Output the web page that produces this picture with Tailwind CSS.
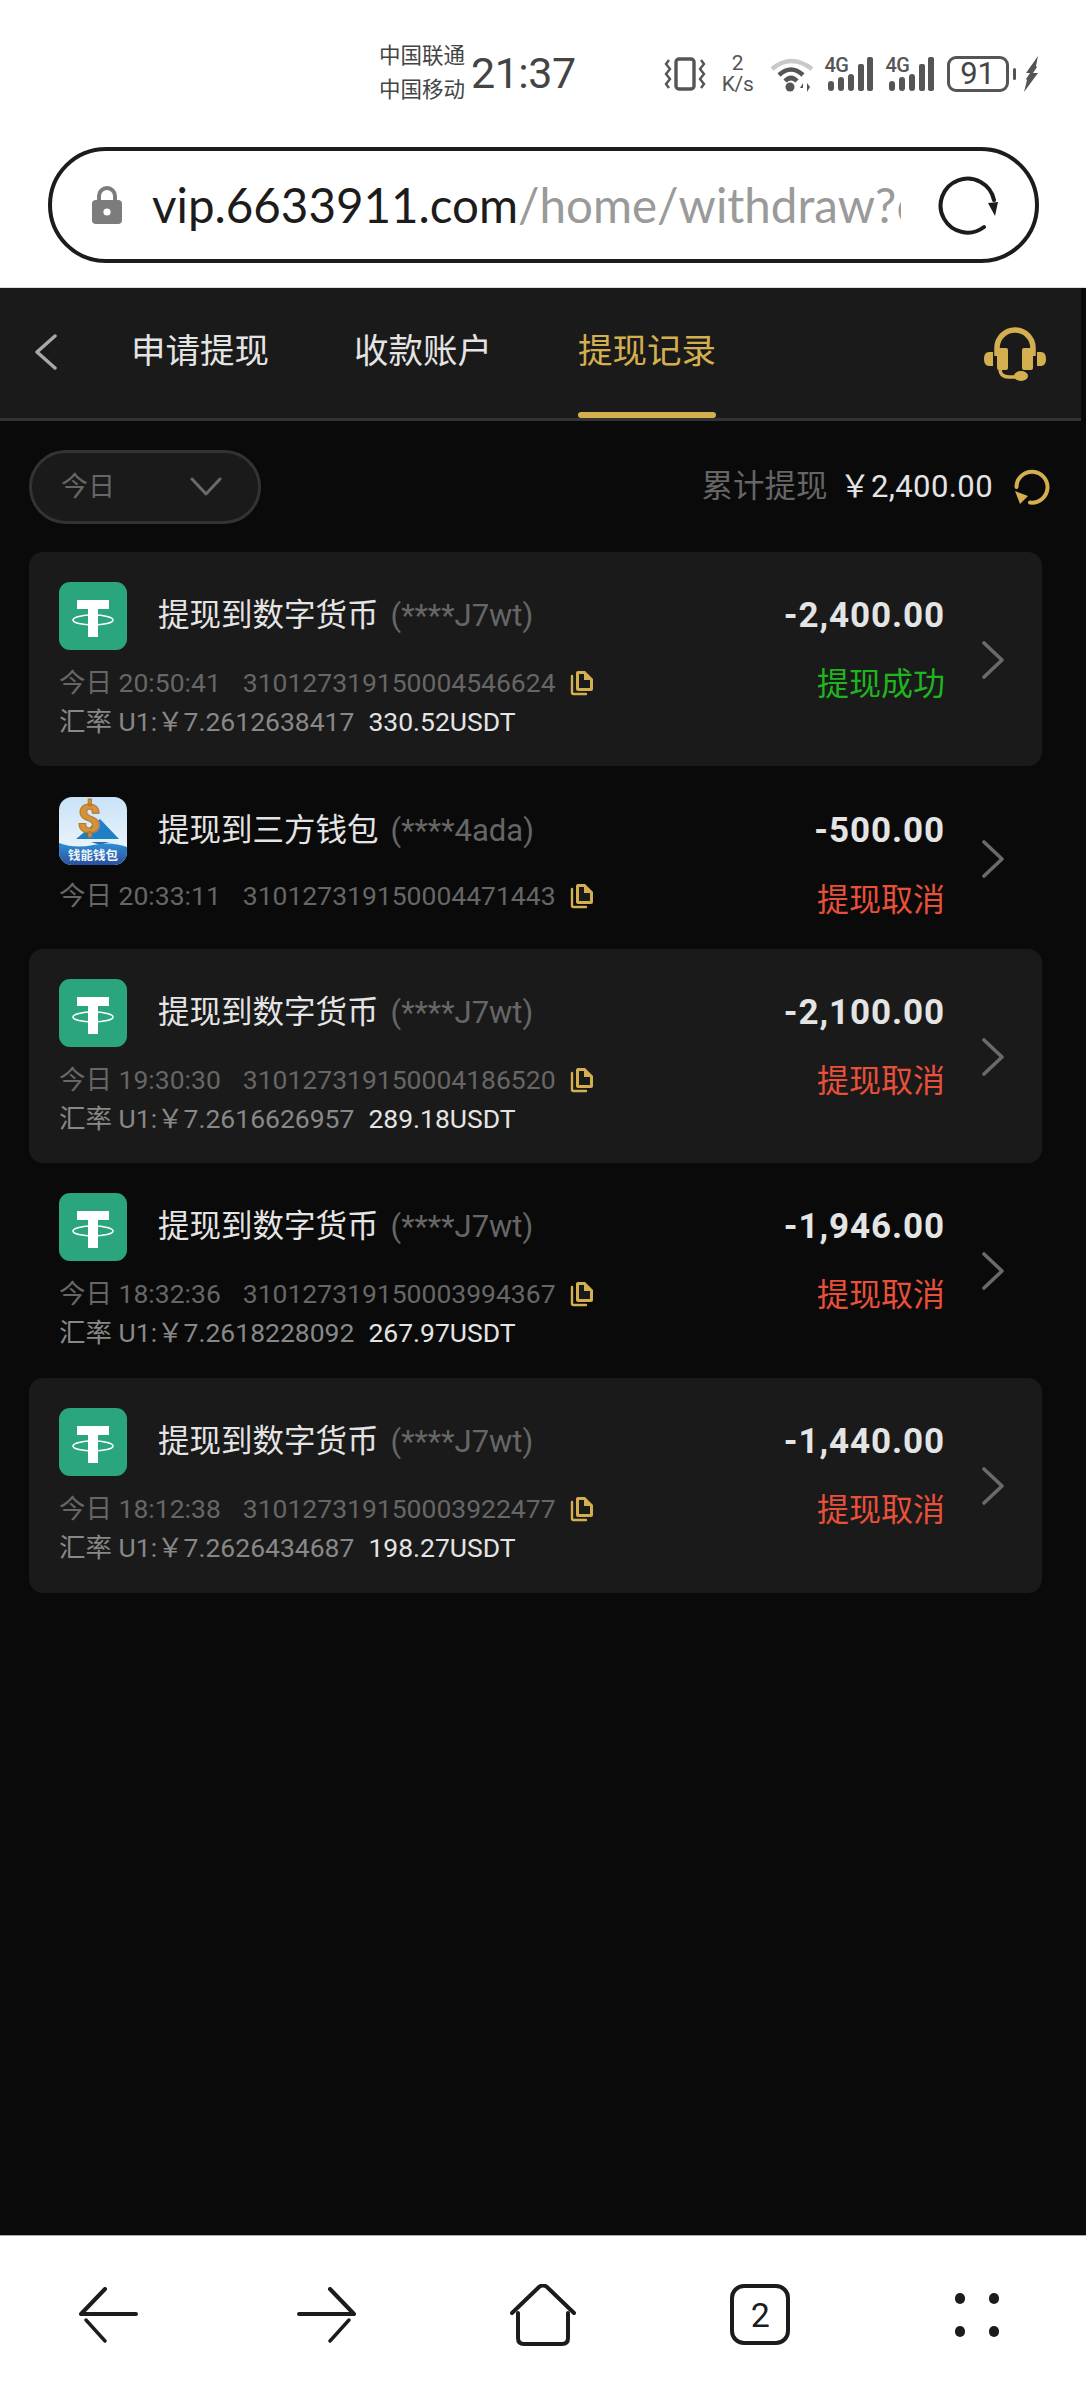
<!DOCTYPE html>
<html lang="zh-CN">
<head>
    <meta charset="UTF-8">
    <meta name="viewport" content="width=device-width, initial-scale=1.0">
    <title>提现记录</title>
    <script src="https://cdn.jsdelivr.net/npm/@tailwindcss/browser@4"></script>
</head>
<body class="bg-[#0a0a0a] h-[2400px] overflow-hidden flex flex-col font-[Roboto,'Noto_Sans_CJK_SC',sans-serif]">
    <!-- shared icons -->
    <svg class="hidden">
        <symbol id="usdt" viewBox="0 0 68 68">
            <rect width="68" height="68" rx="11" fill="#2aa57e"/>
            <rect x="18" y="18" width="32" height="9" fill="#fff"/>
            <rect x="29" y="18" width="10" height="37" fill="#fff"/>
            <ellipse cx="34" cy="38" rx="20" ry="5" fill="none" stroke="#fff" stroke-width="1.6"/>
        </symbol>
        <symbol id="copy" viewBox="0 0 24 26">
            <path d="M2 6v16.5q0 1.5 1.5 1.5H16" fill="none" stroke="#d4af50" stroke-width="2.4" stroke-linecap="round"/>
            <path d="M6 3q0-2 2-2h7l8 8v10q0 2-2 2H8q-2 0-2-2z" fill="#d4af50"/>
            <path d="M9 4h5v6h6v8H9z" fill="#1a1a1a"/>
        </symbol>
        <symbol id="next" viewBox="0 0 24 38">
            <path d="M3 2l18 17L3 36" fill="none" stroke="#6a6a6a" stroke-width="3.6" stroke-linecap="round" stroke-linejoin="round"/>
        </symbol>
    </svg>

    <!-- system status bar -->
    <div class="bg-white h-[147px] shrink-0 flex items-center pl-[379px] text-[#444]">
        <div class="w-[88px] text-[21.5px] leading-[34px] mt-[-2px] whitespace-nowrap">
            <div>中国联通</div>
            <div>中国移动</div>
        </div>
        <span class="ml-[4px] text-[43px] leading-none tracking-[-0.5px]">21:37</span>
        <div class="ml-[88px] flex items-center">
            <svg width="42" height="36" viewBox="0 0 42 36" fill="none" stroke="#555">
                <rect x="12" y="3" width="18" height="30" rx="3" stroke-width="3.4"/>
                <path d="M5 4l-3 4 4 5-4 5 4 5-4 5 3 4M37 4l3 4-4 5 4 5-4 5 4 5-3 4" stroke-width="2.4"/>
            </svg>
            <div class="ml-[13px] w-[38px] flex flex-col items-center text-[21px] leading-[21px] text-[#555]">
                <span>2</span>
                <span class="tracking-[-0.3px]">K/s</span>
            </div>
            <svg class="ml-[13px]" width="44" height="36" viewBox="0 0 44 36" fill="none">
                <path d="M2 13Q21-3 42 13" stroke="#c9c9c9" stroke-width="4.5"/>
                <path d="M9 19Q21 8 33 19M15 25Q21 19 27 25" stroke="#555" stroke-width="4.5"/>
                <circle cx="20" cy="31" r="4.5" fill="#555"/>
                <path d="M33 27l-3 5h3zM37 27v9l3-5z" fill="#555"/>
            </svg>
            <div class="ml-[11px] w-[48px] h-[36px] flex items-start relative">
                <span class="text-[20px] font-medium leading-[18px] text-[#555] tracking-[-0.8px]">4G</span>
                <svg class="absolute left-0 top-0" width="48" height="36" viewBox="0 0 48 36" fill="#555">
                    <rect x="3" y="25" width="6" height="10" rx="3"/><rect x="13" y="21" width="6" height="14" rx="3"/><rect x="23" y="18" width="6" height="17" rx="3"/><rect x="33" y="8" width="6" height="27" rx="2"/><rect x="42" y="1" width="6" height="34" rx="2"/>
                </svg>
            </div>
            <div class="ml-[13px] w-[48px] h-[36px] flex items-start relative">
                <span class="text-[20px] font-medium leading-[18px] text-[#555] tracking-[-0.8px]">4G</span>
                <svg class="absolute left-0 top-0" width="48" height="36" viewBox="0 0 48 36" fill="#555">
                    <rect x="3" y="25" width="6" height="10" rx="3"/><rect x="13" y="21" width="6" height="14" rx="3"/><rect x="23" y="18" width="6" height="17" rx="3"/><rect x="33" y="8" width="6" height="27" rx="2"/><rect x="42" y="1" width="6" height="34" rx="2"/>
                </svg>
            </div>
            <div class="ml-[13px] w-[62px] h-[36px] border-[3px] border-[#555] rounded-[9px] flex items-center justify-center text-[31px] leading-none text-[#444]">91</div>
            <div class="ml-[4px] w-[3px] h-[12px] bg-[#555] rounded-full"></div>
            <svg class="ml-[8px]" width="16" height="36" viewBox="0 0 16 36" fill="#555">
                <path d="M14 0L2 17h4l-4 6 1 1-3 12 14-19h-5l4-6-1-1z"/>
            </svg>
        </div>
    </div>

    <!-- url bar -->
    <div class="bg-white h-[141px] shrink-0 px-[48px] border-b border-[#ddd]">
        <div class="w-[991px] h-[116px] border-[4px] border-[#1c1c1c] rounded-full flex items-center pl-[39px]">
            <svg width="32" height="40" viewBox="0 0 32 40">
                <path d="M8 18v-7a8 8 0 0 1 16 0v7" fill="none" stroke="#7c7c7c" stroke-width="4"/>
                <rect x="1" y="15" width="30" height="24" rx="4" fill="#7c7c7c"/>
                <circle cx="16" cy="27" r="3.6" fill="#fff"/>
            </svg>
            <div class="ml-[29px] w-[749px] overflow-hidden whitespace-nowrap text-[47.5px] leading-[60px] font-[Lato,sans-serif] text-[#1c1c1c] mt-[-1px]">vip.6633911.com<span class="text-[#9a9a9a]">/home/withdraw?c</span></div>
            <svg class="ml-[36px]" width="62" height="62" viewBox="0 0 62 62" fill="none">
                <path d="M57 26A27 27 0 1 0 47 53" stroke="#1c1c1c" stroke-width="4" stroke-linecap="round"/>
                <path d="M51 29l10-1-3 14z" fill="#1c1c1c"/>
            </svg>
        </div>
    </div>

    <!-- tabs -->
    <div class="w-[1081px] h-[133px] shrink-0 bg-[#1a1a1a] border-b-[3px] border-[#333] flex relative">
        <svg class="ml-[34px] mt-[46px]" width="24" height="36" viewBox="0 0 24 36" fill="none">
            <path d="M21 2L3 18l18 16" stroke="#a8a8a8" stroke-width="3.4" stroke-linecap="round" stroke-linejoin="round"/>
        </svg>
        <span class="ml-[73px] mt-[39px] text-[34.5px] leading-[48px] text-[#e4e4e4]">申请提现</span>
        <span class="ml-[85px] mt-[39px] text-[34.5px] leading-[48px] text-[#e4e4e4]">收款账户</span>
        <div class="ml-[86px] w-[138px] h-full relative">
            <span class="block mt-[39px] text-[34.5px] leading-[48px] text-[#d4af50] whitespace-nowrap">提现记录</span>
            <div class="absolute left-0 right-0 bottom-0 h-[6px] rounded-full bg-[#d4af50]"></div>
        </div>
        <svg class="ml-auto mr-[34px] mt-[38px]" width="64" height="56" viewBox="0 0 64 56" fill="#d4af50">
            <path d="M14 30V22a18 18 0 0 1 36 0v8" fill="none" stroke="#d4af50" stroke-width="5.5"/>
            <rect x="14" y="22" width="11" height="22" rx="2"/>
            <rect x="39" y="22" width="11" height="22" rx="2"/>
            <path d="M6 26h4v14H6q-5 0-5-7t5-7zM54 26h4q5 0 5 7t-5 7h-4z"/>
            <path d="M17 43q0 8 9 8h10" fill="none" stroke="#d4af50" stroke-width="3.5"/>
            <ellipse cx="38" cy="50" rx="7" ry="5"/>
        </svg>
    </div>

    <!-- filter + total -->
    <div class="h-[131px] shrink-0 flex items-start pl-[29px] pr-[36px] pt-[29px]">
        <div class="w-[232px] h-[74px] rounded-full bg-[#1a1a1a] border-[3px] border-[#333] flex items-center pl-[29px]">
            <span class="text-[27px] text-[#666]">今日</span>
            <svg class="ml-[75px]" width="32" height="20" viewBox="0 0 32 20" fill="none">
                <path d="M2 2l14 15L30 2" stroke="#6a6a6a" stroke-width="3" stroke-linecap="round" stroke-linejoin="round"/>
            </svg>
        </div>
        <div class="ml-auto h-[74px] flex items-center">
            <span class="text-[31.5px] text-[#666]">累计提现</span>
            <span class="ml-[12px] text-[31px] text-[#e4e4e4] tracking-[0.4px]">￥2,400.00</span>
            <svg class="ml-[21px]" width="36" height="36" viewBox="0 0 36 36" fill="none">
                <path d="M2.5 18A15.5 15.5 0 1 1 16 33.5" stroke="#d4af50" stroke-width="4" stroke-linecap="round"/>
                <path d="M1 22l13 5-8 8z" fill="#d4af50"/>
            </svg>
        </div>
    </div>

    <!-- records -->
    <div class="px-[29px] w-[1071px] flex flex-col">
        <div class="h-[214px] rounded-[14px] bg-[#1a1a1a] pl-[30px] pr-[97px] pt-[30px] flex relative">
            <div class="flex-1">
                <div class="flex items-center h-[68px]">
                    <svg width="68" height="68"><use href="#usdt"/></svg>
                    <span class="ml-[31px] text-[31.5px] text-[#e4e4e4]">提现到数字货币</span>
                    <span class="ml-[12px] text-[31px] text-[#666]">(****J7wt)</span>
                </div>
                <div class="mt-[15px] flex items-center h-[36px] text-[26.5px] text-[#666] whitespace-nowrap">
                    <span>今日 20:50:41</span><span class="ml-[22px]">310127319150004546624</span>
                    <svg class="ml-[14px]" width="24" height="26"><use href="#copy"/></svg>
                </div>
                <div class="mt-[3px] h-[36px] flex items-center text-[26.5px] text-[#888] whitespace-nowrap">
                    <span>汇率 U1:￥7.2612638417</span><span class="ml-[14px] text-[#e4e4e4]">330.52USDT</span>
                </div>
            </div>
            <div class="w-[200px] flex flex-col items-end">
                <span class="mt-[8px] text-[35px] font-bold leading-[52px] text-[#e4e4e4] tracking-[0.9px]">-2,400.00</span>
                <span class="mt-[20px] text-[32px] leading-[44px] text-[#1fb51f]">提现成功</span>
            </div>
            <svg class="absolute right-[37px] top-[89px]" width="24" height="38"><use href="#next"/></svg>
        </div>

        <div class="h-[183px] pl-[30px] pr-[97px] pt-[31px] flex relative">
            <div class="flex-1">
                <div class="flex items-center h-[68px]">
                    <svg width="68" height="68" viewBox="0 0 68 68">
                        <defs>
                            <clipPath id="walletClip"><rect width="68" height="68" rx="13"/></clipPath>
                            <linearGradient id="walletSky" x1="0" y1="0" x2="0" y2="1"><stop offset="0" stop-color="#c9e2f7"/><stop offset="1" stop-color="#f4f9fd"/></linearGradient>
                            <linearGradient id="walletSea" x1="0" y1="0" x2="0" y2="1"><stop offset="0" stop-color="#2f8fd6"/><stop offset="1" stop-color="#2b4f9e"/></linearGradient>
                        </defs>
                        <g clip-path="url(#walletClip)">
                            <rect width="68" height="68" fill="url(#walletSky)"/>
                            <path d="M41 22L60 42H17z" fill="#1f7fc4"/>
                            <path d="M32 45h18l-9 3z" fill="#2b6fb0"/>
                            <path d="M0 46q16 6 34 2t34 2v18H0z" fill="url(#walletSea)"/>
                            <text x="30" y="36" text-anchor="middle" font-size="40" font-weight="900" font-family="Roboto" fill="#d2933c" stroke="#b8752c" stroke-width="1">$</text>
                            <text x="34" y="63" text-anchor="middle" font-size="12.5" font-weight="700" font-family="Noto Sans CJK SC" fill="#eef5fb">钱能钱包</text>
                        </g>
                    </svg>
                    <span class="ml-[31px] text-[31.5px] text-[#e4e4e4]">提现到三方钱包</span>
                    <span class="ml-[12px] text-[31px] text-[#666]">(****4ada)</span>
                </div>
                <div class="mt-[13px] flex items-center h-[36px] text-[26.5px] text-[#666] whitespace-nowrap">
                    <span>今日 20:33:11</span><span class="ml-[22px]">310127319150004471443</span>
                    <svg class="ml-[14px]" width="24" height="26"><use href="#copy"/></svg>
                </div>
            </div>
            <div class="w-[200px] flex flex-col items-end">
                <span class="mt-[8px] text-[35px] font-bold leading-[52px] text-[#e4e4e4] tracking-[0.9px]">-500.00</span>
                <span class="mt-[21px] text-[32px] leading-[44px] text-[#e8503a]">提现取消</span>
            </div>
            <svg class="absolute right-[37px] top-[74px]" width="24" height="38"><use href="#next"/></svg>
        </div>

        <div class="h-[214px] rounded-[14px] bg-[#1a1a1a] pl-[30px] pr-[97px] pt-[30px] flex relative">
            <div class="flex-1">
                <div class="flex items-center h-[68px]">
                    <svg width="68" height="68"><use href="#usdt"/></svg>
                    <span class="ml-[31px] text-[31.5px] text-[#e4e4e4]">提现到数字货币</span>
                    <span class="ml-[12px] text-[31px] text-[#666]">(****J7wt)</span>
                </div>
                <div class="mt-[15px] flex items-center h-[36px] text-[26.5px] text-[#666] whitespace-nowrap">
                    <span>今日 19:30:30</span><span class="ml-[22px]">310127319150004186520</span>
                    <svg class="ml-[14px]" width="24" height="26"><use href="#copy"/></svg>
                </div>
                <div class="mt-[3px] h-[36px] flex items-center text-[26.5px] text-[#888] whitespace-nowrap">
                    <span>汇率 U1:￥7.2616626957</span><span class="ml-[14px] text-[#e4e4e4]">289.18USDT</span>
                </div>
            </div>
            <div class="w-[200px] flex flex-col items-end">
                <span class="mt-[8px] text-[35px] font-bold leading-[52px] text-[#e4e4e4] tracking-[0.9px]">-2,100.00</span>
                <span class="mt-[20px] text-[32px] leading-[44px] text-[#e8503a]">提现取消</span>
            </div>
            <svg class="absolute right-[37px] top-[89px]" width="24" height="38"><use href="#next"/></svg>
        </div>

        <div class="h-[215px] pl-[30px] pr-[97px] pt-[30px] flex relative">
            <div class="flex-1">
                <div class="flex items-center h-[68px]">
                    <svg width="68" height="68"><use href="#usdt"/></svg>
                    <span class="ml-[31px] text-[31.5px] text-[#e4e4e4]">提现到数字货币</span>
                    <span class="ml-[12px] text-[31px] text-[#666]">(****J7wt)</span>
                </div>
                <div class="mt-[15px] flex items-center h-[36px] text-[26.5px] text-[#666] whitespace-nowrap">
                    <span>今日 18:32:36</span><span class="ml-[22px]">310127319150003994367</span>
                    <svg class="ml-[14px]" width="24" height="26"><use href="#copy"/></svg>
                </div>
                <div class="mt-[3px] h-[36px] flex items-center text-[26.5px] text-[#888] whitespace-nowrap">
                    <span>汇率 U1:￥7.2618228092</span><span class="ml-[14px] text-[#e4e4e4]">267.97USDT</span>
                </div>
            </div>
            <div class="w-[200px] flex flex-col items-end">
                <span class="mt-[8px] text-[35px] font-bold leading-[52px] text-[#e4e4e4] tracking-[0.9px]">-1,946.00</span>
                <span class="mt-[20px] text-[32px] leading-[44px] text-[#e8503a]">提现取消</span>
            </div>
            <svg class="absolute right-[37px] top-[89px]" width="24" height="38"><use href="#next"/></svg>
        </div>

        <div class="h-[215px] rounded-[14px] bg-[#1a1a1a] pl-[30px] pr-[97px] pt-[30px] flex relative">
            <div class="flex-1">
                <div class="flex items-center h-[68px]">
                    <svg width="68" height="68"><use href="#usdt"/></svg>
                    <span class="ml-[31px] text-[31.5px] text-[#e4e4e4]">提现到数字货币</span>
                    <span class="ml-[12px] text-[31px] text-[#666]">(****J7wt)</span>
                </div>
                <div class="mt-[15px] flex items-center h-[36px] text-[26.5px] text-[#666] whitespace-nowrap">
                    <span>今日 18:12:38</span><span class="ml-[22px]">310127319150003922477</span>
                    <svg class="ml-[14px]" width="24" height="26"><use href="#copy"/></svg>
                </div>
                <div class="mt-[3px] h-[36px] flex items-center text-[26.5px] text-[#888] whitespace-nowrap">
                    <span>汇率 U1:￥7.2626434687</span><span class="ml-[14px] text-[#e4e4e4]">198.27USDT</span>
                </div>
            </div>
            <div class="w-[200px] flex flex-col items-end">
                <span class="mt-[8px] text-[35px] font-bold leading-[52px] text-[#e4e4e4] tracking-[0.9px]">-1,440.00</span>
                <span class="mt-[20px] text-[32px] leading-[44px] text-[#e8503a]">提现取消</span>
            </div>
            <svg class="absolute right-[37px] top-[89px]" width="24" height="38"><use href="#next"/></svg>
        </div>
    </div>

    <!-- browser toolbar -->
    <div class="mt-auto h-[165px] shrink-0 bg-white border-t-[1px] border-[#aaa] grid grid-cols-5 items-center pb-[7px]">
        <svg class="justify-self-center" width="60" height="56" viewBox="0 0 60 56" fill="none" stroke="#1c1c1c" stroke-linecap="round" stroke-linejoin="round">
            <path d="M26 2L2 27h55" stroke-width="4"/>
            <path d="M26 54L7 33" stroke-width="3.4"/>
        </svg>
        <svg class="justify-self-center" width="60" height="56" viewBox="0 0 60 56" fill="none" stroke="#1c1c1c" stroke-linecap="round" stroke-linejoin="round">
            <path d="M34 2l24 25H3" stroke-width="4"/>
            <path d="M34 54l19-21" stroke-width="3.4"/>
        </svg>
        <svg class="justify-self-center" width="66" height="62" viewBox="0 0 66 62" fill="none" stroke="#1c1c1c" stroke-width="4" stroke-linecap="round" stroke-linejoin="round">
            <path d="M2 29L29 3q4-3 8 0l27 26"/>
            <path d="M8 29v25q0 6 6 6h38q6 0 6-6V29"/>
        </svg>
        <div class="justify-self-center w-[60px] h-[61px] border-[4px] border-[#1c1c1c] rounded-[14px] flex items-center justify-center text-[34px] leading-none text-[#1c1c1c]">2</div>
        <div class="justify-self-center grid grid-cols-2 gap-x-[24px] gap-y-[22px]">
            <div class="w-[10px] h-[11px] rounded-full bg-[#1c1c1c]"></div>
            <div class="w-[10px] h-[11px] rounded-full bg-[#1c1c1c]"></div>
            <div class="w-[10px] h-[11px] rounded-full bg-[#1c1c1c]"></div>
            <div class="w-[10px] h-[11px] rounded-full bg-[#1c1c1c]"></div>
        </div>
    </div>
</body>
</html>
